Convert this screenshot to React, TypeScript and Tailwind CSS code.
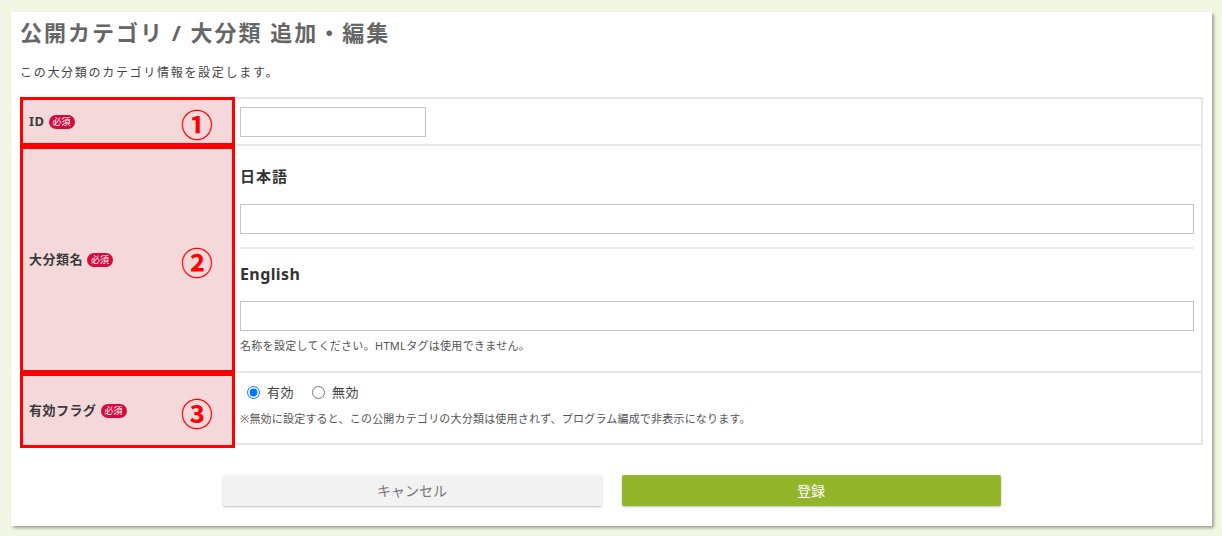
import React from "react";

const font = { fontFamily: '"Noto Sans", "Noto Sans CJK JP", sans-serif' };

function Badge() {
  return (
    <span className="ml-[4px] inline-flex h-[14px] w-[26px] items-center justify-center rounded-full bg-[#d50b3c] text-[9px] font-normal leading-none text-white">
      必須
    </span>
  );
}

function Circled({ n }: { n: string }) {
  return (
    <span className="ml-auto mr-[17px] flex w-[36px] translate-y-[3px] justify-center text-[32px] font-bold leading-none text-[#ff0000]">
      {n}
    </span>
  );
}

function Label({ text, n }: { text: string; n: string }) {
  return (
    <div className="flex w-[215px] shrink-0 items-center border-[3px] border-[#ff0000] bg-[#f5d9da] pl-[6px]">
      <span className="text-[13px] font-bold tracking-[0.5px] text-[#3a3a3a]">{text}</span>
      <Badge />
      <Circled n={n} />
    </div>
  );
}

export default function App() {
  return (
    <div className="min-h-[536px] bg-[#f2f7e4] px-[11px] pt-[12px] pb-[10px]" style={font}>
      <div className="w-[1201px] bg-white px-[9px] pt-[5px] pb-[20px] shadow-[2px_2px_3px_rgba(0,0,0,0.35)]">
        <h1 className="text-[22px] font-bold leading-[30px] tracking-[2px] text-[#666666]">
          公開カテゴリ / 大分類 追加・編集
        </h1>
        <p className="mt-[17px] text-[12px] leading-[18px] tracking-[1.7px] text-[#444444]">
          この大分類のカテゴリ情報を設定します。
        </p>

        <div className="mt-[15px] flex flex-col">
          {/* Row 1 */}
          <div className="flex h-[49px]">
            <Label text="ID" n="①" />
            <div className="flex flex-1 items-center border-y-2 border-r-2 border-[#e8e8e8] pl-[5px] pr-[7px]">
              <input
                type="text"
                className="h-[30px] w-[186px] border border-[#c4c4c4] bg-white outline-none"
              />
            </div>
          </div>

          {/* Row 2 */}
          <div className="flex h-[227px]">
            <Label text="大分類名" n="②" />
            <div className="flex flex-1 flex-col border-b-2 border-r-2 border-[#e8e8e8] pl-[5px] pr-[7px] pt-[20px]">
              <div className="text-[15px] font-bold leading-[20px] tracking-[1px] text-[#333333]">日本語</div>
              <input
                type="text"
                className="mt-[18px] h-[30px] w-full border border-[#c4c4c4] bg-white outline-none"
              />
              <div className="mt-[13px] h-[2px] w-full bg-[#ececec]" />
              <div className="mt-[15px] text-[16px] font-bold leading-[20px] tracking-[0.4px] text-[#333333]">English</div>
              <input
                type="text"
                className="mt-[17px] h-[30px] w-full border border-[#c4c4c4] bg-white outline-none"
              />
              <div className="mt-[7px] text-[11px] leading-[16px] tracking-[0.3px] text-[#555555]">
                名称を設定してください。HTMLタグは使用できません。
              </div>
            </div>
          </div>

          {/* Row 3 */}
          <div className="flex h-[75px]">
            <Label text="有効フラグ" n="③" />
            <div className="mb-[3px] flex flex-1 flex-col border-b-2 border-r-2 border-[#e8e8e8] pl-[5px] pr-[7px] pt-[9px]">
              <div className="flex items-center text-[13px] leading-[20px] tracking-[0.5px] text-[#444444]">
                <label className="flex items-center">
                  <input type="radio" name="flag" defaultChecked className="ml-[7px] mr-[7px] h-[13px] w-[13px]" />
                  有効
                </label>
                <label className="ml-[18px] flex items-center">
                  <input type="radio" name="flag" className="mr-[7px] h-[13px] w-[13px]" />
                  無効
                </label>
              </div>
              <div className="mt-[9px] text-[11px] leading-[16px] tracking-[0.2px] text-[#555555]">
                ※無効に設定すると、この公開カテゴリの大分類は使用されず、プログラム編成で非表示になります。
              </div>
            </div>
          </div>
        </div>

        <div className="mt-[27px] flex justify-center gap-[20px]">
          <button className="h-[31px] w-[379px] rounded-[2px] bg-[#f2f2f2] text-[14px] text-[#777777] shadow-[0_1px_2px_rgba(0,0,0,0.25)]">
            キャンセル
          </button>
          <button className="h-[31px] w-[379px] rounded-[2px] bg-[#93b52a] text-[14px] text-white shadow-[0_1px_2px_rgba(0,0,0,0.25)]">
            登録
          </button>
        </div>
      </div>
    </div>
  );
}
